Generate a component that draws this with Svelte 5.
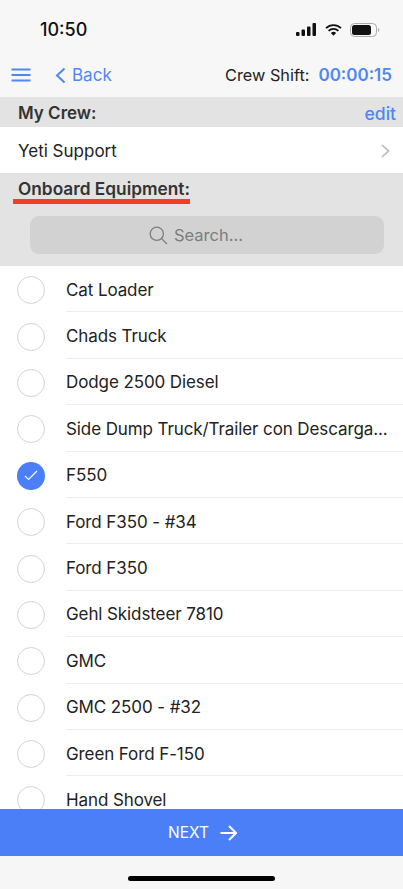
<script lang="ts">
  const equipment = [
    { name: 'Cat Loader' },
    { name: 'Chads Truck' },
    { name: 'Dodge 2500 Diesel' },
    { name: 'Side Dump Truck/Trailer con Descarga...' },
    { name: 'F550', checked: true },
    { name: 'Ford F350 - #34' },
    { name: 'Ford F350' },
    { name: 'Gehl Skidsteer 7810' },
    { name: 'GMC' },
    { name: 'GMC 2500 - #32' },
    { name: 'Green Ford F-150' },
    { name: 'Hand Shovel' }
  ];
</script>

<div class="screen">
  <header>
    <div class="status">
      <span class="time">10:50</span>
      <div class="statusIcons">
        <svg width="21" height="13" viewBox="0 0 21 13">
          <rect x="0" y="9" width="3.5" height="4" rx="1" />
          <rect x="5.5" y="6.5" width="3.5" height="6.5" rx="1" />
          <rect x="11" y="3.5" width="3.5" height="9.5" rx="1" />
          <rect x="16.5" y="0" width="3.5" height="13" rx="1" />
        </svg>
        <svg width="17" height="12" viewBox="0 0 17 12">
          <path d="M1 4.2a10.6 10.6 0 0 1 15 0M3.6 6.9a7 7 0 0 1 9.8 0" fill="none" stroke="#111" stroke-width="1.9" />
          <path d="M5.9 9.1a3.6 3.6 0 0 1 5.2 0L8.5 11.8z" />
        </svg>
        <svg width="30" height="14" viewBox="0 0 30 14">
          <rect x="0.5" y="0.5" width="26" height="13" rx="4" fill="none" stroke="#aaa" />
          <rect x="2" y="2" width="19" height="10" rx="2.5" />
          <path d="M28 5v4a2 2 0 0 0 1.3-2 2 2 0 0 0-1.3-2z" fill="#aaa" />
        </svg>
      </div>
    </div>
    <nav>
      <svg class="menu" width="20" height="14" viewBox="0 0 20 14">
        <path d="M0.5 1.5h19M0.5 7h19M0.5 12.5h19" fill="none" stroke="#5086f5" stroke-width="2" />
      </svg>
      <svg class="chevron" width="11" height="17" viewBox="0 0 11 17">
        <path d="M9.5 1.5 2 8.5l7.5 7" fill="none" stroke="#5086f5" stroke-width="2" />
      </svg>
      <span class="back">Back</span>
      <span class="shiftLabel">Crew Shift:</span>
      <span class="shiftTime">00:00:15</span>
    </nav>
  </header>

  <div class="crewHead">
    <span class="sectionTitle">My Crew:</span>
    <span class="edit">edit</span>
  </div>
  <div class="crewRow">
    <span>Yeti Support</span>
    <svg width="9" height="14" viewBox="0 0 9 14">
      <path d="M1 1l6.5 6L1 13" fill="none" stroke="#b5b5b8" stroke-width="1.5" />
    </svg>
  </div>

  <section class="equipHead">
    <span class="sectionTitle underlined">Onboard Equipment:</span>
    <div class="search">
      <svg width="19" height="19" viewBox="0 0 19 19">
        <circle cx="7.8" cy="7.8" r="6.6" fill="none" stroke="#7d7d7d" stroke-width="1.3" />
        <path d="M12.6 12.6 18 18" fill="none" stroke="#7d7d7d" stroke-width="1.3" />
      </svg>
      <span>Search...</span>
    </div>
  </section>

  <ul>
    {#each equipment as item}
      <li>
        {#if item.checked}
          <span class="radio checked">
            <svg width="14" height="11" viewBox="0 0 14 11">
              <path d="M1 6l3.5 3.5L13 1" fill="none" stroke="#fff" stroke-width="1.2" />
            </svg>
          </span>
        {:else}
          <span class="radio"></span>
        {/if}
        <span class="name">{item.name}</span>
      </li>
    {/each}
  </ul>

  <button class="next">
    <span>NEXT</span>
    <svg width="17" height="16" viewBox="0 0 17 16">
      <path d="M0.5 8h15M9 1l7 7-7 7" fill="none" stroke="#fff" stroke-width="2" />
    </svg>
  </button>
  <footer><div class="homeBar"></div></footer>
</div>

<style>
  :global(body) {
    margin: 0;
    background: #f6f6f6;
  }

  .screen {
    width: 403px;
    height: 889px;
    display: flex;
    flex-direction: column;
    overflow: hidden;
    font-family: Inter, "Liberation Sans", sans-serif;
    font-size: 17px;
    color: #222;
  }

  header {
    height: 97px;
    flex: none;
    box-sizing: border-box;
    background: #f7f7f7;
  }

  .status {
    height: 57px;
    box-sizing: border-box;
    padding: 2px 23px 0 40px;
    display: flex;
    justify-content: space-between;
    align-items: center;
  }

  .time {
    font-size: 18px;
    font-weight: 500;
    color: #111;
  }

  .statusIcons {
    display: flex;
    align-items: center;
    gap: 8px;
  }

  .statusIcons svg {
    fill: #111;
  }

  nav {
    height: 36px;
    padding: 0 11px 0 11px;
    display: flex;
    align-items: center;
  }

  .menu {
    margin-right: 24px;
  }

  .back {
    margin-left: 6px;
    color: #5086f5;
    font-size: 17px;
  }

  .shiftLabel {
    margin-left: auto;
    font-size: 16.3px;
    color: #222;
  }

  .shiftTime {
    margin-left: 9px;
    font-size: 17px;
    font-weight: 600;
    color: #5086f5;
  }

  .crewHead {
    height: 30px;
    flex: none;
    box-sizing: border-box;
    padding: 2px 7px 0 18px;
    display: flex;
    justify-content: space-between;
    align-items: center;
    background: #e3e3e3;
  }

  .sectionTitle {
    font-size: 17px;
    font-weight: 600;
    color: #333;
  }

  .edit {
    color: #5086f5;
    font-size: 17.5px;
    font-weight: 500;
  }

  .crewRow {
    height: 46px;
    flex: none;
    box-sizing: border-box;
    padding: 2px 13px 0 18px;
    display: flex;
    justify-content: space-between;
    align-items: center;
    background: #fff;
  }

  .equipHead {
    height: 93px;
    flex: none;
    box-sizing: border-box;
    padding-top: 6px;
    background: #e3e3e3;
    display: flex;
    flex-direction: column;
    align-items: flex-start;
  }

  .underlined {
    margin-left: 13px;
    padding: 0 0 0 5px;
    font-size: 17.3px;
    line-height: 20px;
    border-bottom: 5px solid #ee4123;
  }

  .search {
    width: 354px;
    height: 38px;
    margin: 12px 0 0 30px;
    padding-right: 22px;
    box-sizing: border-box;
    border-radius: 9px;
    background: #d2d2d2;
    display: flex;
    justify-content: center;
    align-items: center;
    gap: 6px;
    font-size: 16.5px;
    color: #7d7d7d;
  }

  ul {
    flex: 1;
    min-height: 0;
    margin: 0;
    padding: 0;
    list-style: none;
    background: #fff;
    overflow: hidden;
  }

  li {
    height: 46.4px;
    padding-left: 17px;
    display: flex;
    align-items: center;
  }

  .radio {
    flex: none;
    width: 28px;
    height: 28px;
    margin-top: 2px;
    box-sizing: border-box;
    border: 1.5px solid #d4d4d4;
    border-radius: 50%;
    display: flex;
    justify-content: center;
    align-items: center;
  }

  .radio.checked {
    border: none;
    background: #4b7ff7;
  }

  .name {
    margin-left: 21px;
    padding-top: 2px;
    flex: 1;
    height: 100%;
    display: flex;
    align-items: center;
    white-space: nowrap;
    letter-spacing: -0.1px;
    border-bottom: 1px solid #eee;
    box-sizing: border-box;
  }

  .next {
    height: 47px;
    flex: none;
    border: none;
    padding: 0 0 0 2px;
    background: #4b7ff7;
    color: #fff;
    font: inherit;
    font-size: 15.5px;
    display: flex;
    justify-content: center;
    align-items: center;
    gap: 11px;
  }

  footer {
    height: 33px;
    flex: none;
    background: #f6f6f6;
    display: flex;
    justify-content: center;
  }

  .homeBar {
    width: 147px;
    height: 5px;
    margin-top: 20px;
    border-radius: 3px;
    background: #000;
  }
</style>
